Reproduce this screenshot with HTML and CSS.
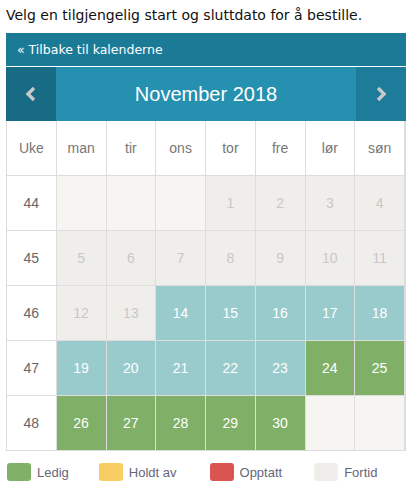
FILE: index.html
```html
<!DOCTYPE html>
<html lang="no">
<head>
<meta charset="utf-8">
<link rel="stylesheet" href="styles.css">
</head>
<body>
<p class="intro">Velg en tilgjengelig start og sluttdato for å bestille.</p>
<div class="cal">
  <div class="back">« Tilbake til kalenderne</div>
  <div class="nav">
    <div class="navbtn prev"><svg width="12" height="16" viewBox="0 0 12 16"><path d="M9 2 L3 8 L9 14" fill="none" stroke="#c9c9c9" stroke-width="3.4"/></svg></div>
    <div class="title">November 2018</div>
    <div class="navbtn next"><svg width="12" height="16" viewBox="0 0 12 16"><path d="M3 2 L9 8 L3 14" fill="none" stroke="#c9c9c9" stroke-width="3.4"/></svg></div>
  </div>
  <div class="grid">
    <div class="hd">Uke</div><div class="hd">man</div><div class="hd">tir</div><div class="hd">ons</div><div class="hd">tor</div><div class="hd">fre</div><div class="hd">lør</div><div class="hd">søn</div>

    <div class="wk">44</div><div class="d empty"></div><div class="d empty"></div><div class="d empty"></div><div class="d past">1</div><div class="d past">2</div><div class="d past">3</div><div class="d past">4</div>

    <div class="wk">45</div><div class="d past">5</div><div class="d past">6</div><div class="d past">7</div><div class="d past">8</div><div class="d past">9</div><div class="d past">10</div><div class="d past">11</div>

    <div class="wk">46</div><div class="d past">12</div><div class="d past">13</div><div class="d sel">14</div><div class="d sel">15</div><div class="d sel">16</div><div class="d sel">17</div><div class="d sel">18</div>

    <div class="wk">47</div><div class="d sel">19</div><div class="d sel">20</div><div class="d sel">21</div><div class="d sel">22</div><div class="d sel">23</div><div class="d free">24</div><div class="d free">25</div>

    <div class="wk">48</div><div class="d free">26</div><div class="d free">27</div><div class="d free">28</div><div class="d free">29</div><div class="d free">30</div><div class="d empty"></div><div class="d empty"></div>
  </div>
  <div class="legend">
    <div class="item i1"><span class="sw free"></span>Ledig</div>
    <div class="item i2"><span class="sw held"></span>Holdt av</div>
    <div class="item i3"><span class="sw busy"></span>Opptatt</div>
    <div class="item i4"><span class="sw past"></span>Fortid</div>
  </div>
</div>
</body>
</html>
```
FILE: styles.css
```css
html, body { margin: 0; padding: 0; background: #fff; }
body { padding: 0 6px; font-family: "DejaVu Sans", Verdana, sans-serif; }
.intro {
  margin: 0;
  padding-top: 7px;
  height: 26px;
  font-size: 14px;
  line-height: 16px;
  color: #111;
}
.cal { width: 400px; }
.back {
  background: #1b7b97;
  color: #fff;
  font-size: 12.5px;
  height: 33px;
  line-height: 33px;
  padding-left: 11px;
  border-bottom: 1px solid #fff;
}
.nav {
  display: flex;
  height: 54px;
  background: #2590b0;
}
.navbtn {
  width: 50px;
  display: flex;
  align-items: center;
  justify-content: center;
}
.prev { background: #186b84; }
.next { background: #1c7c99; }
.title {
  flex: 1;
  display: flex;
  align-items: center;
  justify-content: center;
  color: #fff;
  font-family: "Liberation Sans", Arial, sans-serif;
  font-size: 20px;
}
.grid {
  display: grid;
  grid-template-columns: repeat(8, 1fr);
  grid-auto-rows: 54px;
  gap: 1px;
  background: #dddddd;
  border: 1px solid #dddddd;
  border-top: 0;
  border-right-width: 2px;
  font-family: "Liberation Sans", Arial, sans-serif;
  font-size: 14px;
}
.grid > div {
  display: flex;
  align-items: center;
  justify-content: center;
}
.hd { background: #fff; color: #777; }
.wk { background: #fff; color: #666; }
.empty { background: #f6f5f1; }
.past { background: #f0eeea; color: #c8c8c8; }
.sel { background: #99cbcd; color: #fff; }
.free { background: #80b067; color: #fff; }
.legend {
  display: flex;
  margin-top: 12px;
  padding-left: 1px;
  font-family: "Liberation Sans", Arial, sans-serif;
  font-size: 13px;
  color: #66667a;
}
.item { display: flex; align-items: center; gap: 6px; }
.i2 { margin-left: 30px; }
.i3 { margin-left: 33px; }
.i4 { margin-left: 32px; }
.sw {
  display: inline-block;
  width: 24px;
  height: 18px;
  border-radius: 3px;
}
.sw.free { background: #80b067; }
.sw.held { background: #f9cd62; }
.sw.busy { background: #da5552; }
.sw.past { background: #f0eeea; }
```
